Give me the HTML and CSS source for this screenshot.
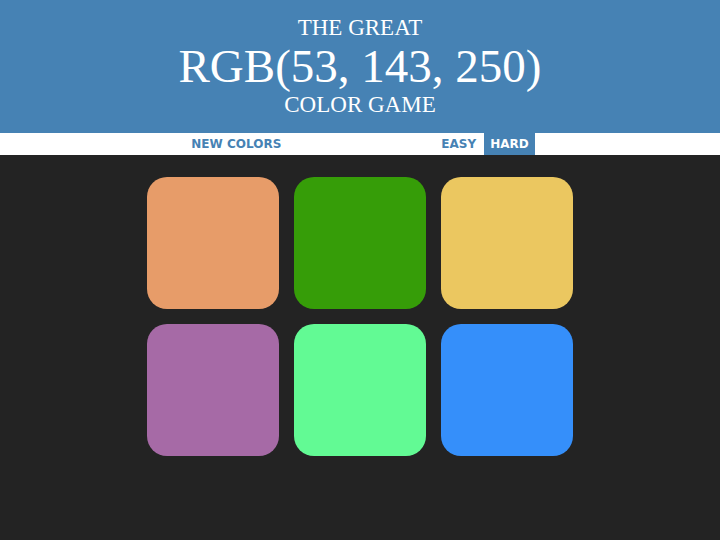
FILE: index.html
```html
<!DOCTYPE html>
<html lang="en">
<head>
<meta charset="utf-8">
<title>Color Game</title>
<link rel="stylesheet" href="styles.css">
</head>
<body>
<header class="banner">
  <h1 class="title">The Great <span class="target">RGB(53, 143, 250)</span> Color Game</h1>
</header>
<nav class="controls" aria-label="Game controls">
  <button class="control" type="button">New Colors</button>
  <span class="message" role="status"></span>
  <div class="modes">
    <button class="control" type="button">Easy</button>
    <button class="control selected" type="button">Hard</button>
  </div>
</nav>
<main class="board">
  <button class="square orange" type="button" aria-label="Color 1"></button>
  <button class="square green" type="button" aria-label="Color 2"></button>
  <button class="square yellow" type="button" aria-label="Color 3"></button>
  <button class="square purple" type="button" aria-label="Color 4"></button>
  <button class="square mint" type="button" aria-label="Color 5"></button>
  <button class="square blue" type="button" aria-label="Color 6"></button>
</main>
</body>
</html>
```
FILE: styles.css
```css
body {
  margin: 0;
  background: #232323;
}

.banner {
  padding: 15px 0;
  background: #4682b4;
  color: #fff;
  text-align: center;
}

.title {
  margin: 0;
  font: 23px/26px "Liberation Serif", "Times New Roman", serif;
  text-transform: uppercase;
}

.target {
  display: block;
  font-size: 47px;
  line-height: 51px;
}

.controls {
  display: flex;
  justify-content: center;
  height: 22px;
  background: #fff;
}

.control {
  padding: 0 6px;
  border: 0;
  background: none;
  color: #4682b4;
  font: bold 12px "DejaVu Sans", Verdana, sans-serif;
  text-transform: uppercase;
}

.modes {
  display: flex;
  gap: 2px;
}

.selected {
  background: #4682b4;
  color: #fff;
}

.message {
  width: 148px;
}

.board {
  display: grid;
  grid-template-columns: repeat(3, 1fr);
  gap: 15px;
  max-width: 426px;
  margin: 22px auto;
}

.square {
  aspect-ratio: 1;
  padding: 0;
  border: 0;
  border-radius: 20px;
}

.orange { background: #e79c69; }
.green { background: #369d08; }
.yellow { background: #ebc760; }
.purple { background: #a66aa6; }
.mint { background: #62fa94; }
.blue { background: #358ffa; }
```
